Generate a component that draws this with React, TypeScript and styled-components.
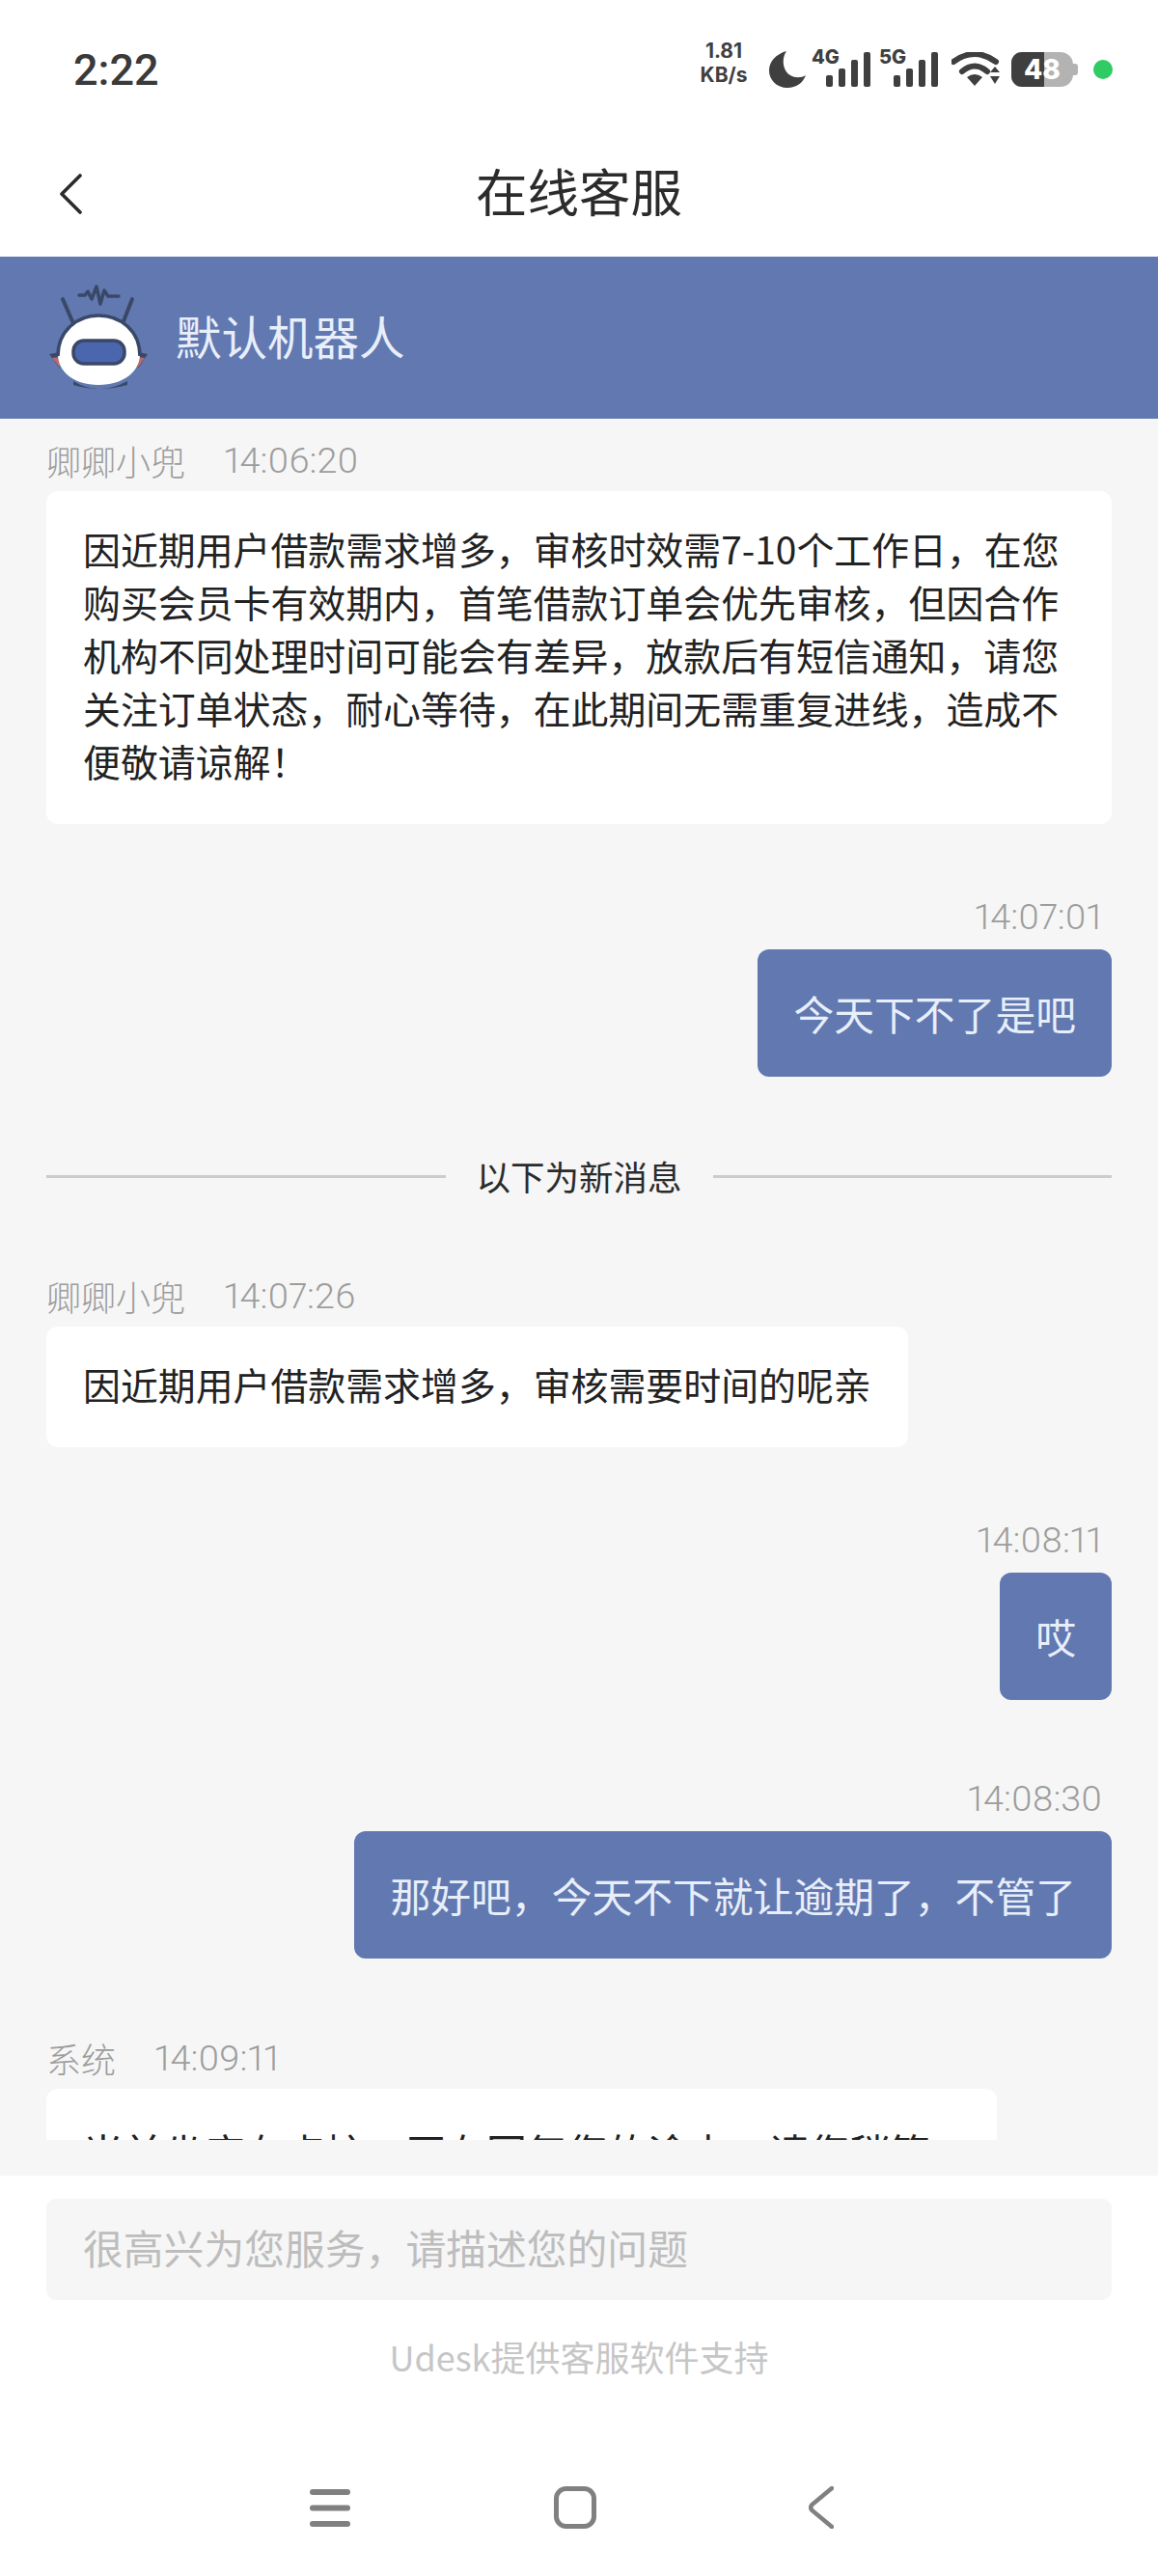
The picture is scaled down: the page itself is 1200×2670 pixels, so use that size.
import React from "react";
import styled, { createGlobalStyle, css } from "styled-components";

const GlobalStyle = createGlobalStyle`
  html, body {
    margin: 0;
    padding: 0;
    background: #ffffff;
  }
  * {
    box-sizing: border-box;
  }
`;

const CJK = `"Noto Sans CJK SC", "Noto Sans", sans-serif`;
const LATIN = `Roboto, "Noto Sans CJK SC", sans-serif`;

type Msg =
  | { kind: "in"; name: string; time: string; text: string; top: number; large?: boolean }
  | { kind: "out"; time: string; text: string; top: number }
  | { kind: "divider"; text: string; top: number };

const messages: Msg[] = [
  {
    kind: "in",
    name: "卿卿小兜",
    time: "14:06:20",
    text: "因近期用户借款需求增多，审核时效需7-10个工作日，在您购买会员卡有效期内，首笔借款订单会优先审核，但因合作机构不同处理时间可能会有差异，放款后有短信通知，请您关注订单状态，耐心等待，在此期间无需重复进线，造成不便敬请谅解！",
    top: 16,
  },
  { kind: "out", time: "14:07:01", text: "今天下不了是吧", top: 70 },
  { kind: "divider", text: "以下为新消息", top: 78 },
  {
    kind: "in",
    name: "卿卿小兜",
    time: "14:07:26",
    text: "因近期用户借款需求增多，审核需要时间的呢亲",
    top: 72,
  },
  { kind: "out", time: "14:08:11", text: "哎", top: 70 },
  { kind: "out", time: "14:08:30", text: "那好吧，今天不下就让逾期了，不管了", top: 76 },
  {
    kind: "in",
    name: "系统",
    time: "14:09:11",
    text: "当前坐席有点忙，正在回复您的途中，请您稍等",
    top: 76,
    large: true,
  },
];

const SignalBars = () => (
  <svg width="46" height="36" viewBox="0 0 46 36">
    <rect x="0" y="24" width="7" height="12" rx="2" fill="#3f3f3f" />
    <rect x="13" y="17" width="7" height="19" rx="2" fill="#3f3f3f" />
    <rect x="26" y="8" width="7" height="28" rx="2" fill="#3f3f3f" />
    <rect x="39" y="0" width="7" height="36" rx="2" fill="#3f3f3f" />
  </svg>
);

const RobotLogo = () => (
  <svg width="105" height="110" viewBox="0 0 105 110">
    <path
      d="M32 11 L38 11 L41 7 L45 15 L50 2 L54 20 L58 6 L62 12 L73 12"
      fill="none"
      stroke="#3a4868"
      strokeWidth="3.5"
      strokeLinejoin="round"
      strokeLinecap="round"
    />
    <path d="M15 15 L25 38 M87 15 L78 38" stroke="#3a4868" strokeWidth="4" strokeLinecap="round" />
    <path d="M1 72 L12 70 L12 87 Z M103 72 L93 70 L93 87 Z" fill="#3a4868" />
    <path d="M4 76 L12 75 L12 86 Z M100 76 L93 75 L93 86 Z" fill="#b86a72" />
    <path d="M26 100 Q52 116 82 100 L82 104 Q52 112 26 104 Z" fill="#3a4868" />
    <path
      d="M10 72 C10 48 30 32 52 32 C75 32 95 48 95 72 C95 90 78 104 52 104 C26 104 10 90 10 72 Z"
      fill="#ffffff"
    />
    <path d="M10 74 C10 48 30 32 52 32 C75 32 95 48 95 74" fill="none" stroke="#3a4868" strokeWidth="3.5" />
    <rect x="26" y="58" width="53" height="24" rx="11" fill="#4a66ae" stroke="#3a4868" strokeWidth="3.5" />
  </svg>
);

export default function App() {
  return (
    <Page>
      <GlobalStyle />
      <StatusBar>
        <Clock>2:22</Clock>
        <StatusIcons>
          <NetSpeed>
            <span>1.81</span>
            <span>KB/s</span>
          </NetSpeed>
          <MoonIcon width="38" height="38" viewBox="0 0 38 38">
            <path
              d="M18 0 C7 3 0 11 0 20 C0 30 8 38 19 38 C28 38 35 33 38 25 C33 28 27 28 22 25 C15 21 12 9 18 0 Z"
              fill="#3f3f3f"
            />
          </MoonIcon>
          <Signal>
            <SignalLabel>4G</SignalLabel>
            <SignalBars />
          </Signal>
          <Signal>
            <SignalLabel>5G</SignalLabel>
            <SignalBars />
          </Signal>
          <WifiIcon width="50" height="36" viewBox="0 0 50 36">
            <path d="M2 10 Q24 -6 46 10" fill="none" stroke="#3f3f3f" strokeWidth="6" strokeLinecap="round" />
            <path d="M11 20 Q24 9 37 20" fill="none" stroke="#3f3f3f" strokeWidth="6" strokeLinecap="round" />
            <path d="M16 26 Q24 20 32 26 L24 35 Z" fill="#3f3f3f" />
            <path d="M40 21 L45 15 L50 21 Z M40 25 L50 25 L45 33 Z" fill="#3f3f3f" />
          </WifiIcon>
          <Battery>
            <BatteryFill />
            <BatteryLabel>48</BatteryLabel>
          </Battery>
          <GreenDot />
        </StatusIcons>
      </StatusBar>

      <NavBar>
        <BackButton>
          <svg width="24" height="42" viewBox="0 0 24 42">
            <path d="M22 2 L3 21 L22 40" fill="none" stroke="#2b2b2b" strokeWidth="3.6" strokeLinecap="round" strokeLinejoin="round" />
          </svg>
        </BackButton>
        <NavTitle>在线客服</NavTitle>
      </NavBar>

      <AgentBar>
        <RobotLogo />
        <AgentName>默认机器人</AgentName>
      </AgentBar>

      <ChatArea>
        <ChatScroll>
          {messages.map((m, i) => {
            if (m.kind === "divider") {
              return (
                <Divider key={i} $top={m.top}>
                  <span>{m.text}</span>
                </Divider>
              );
            }
            if (m.kind === "out") {
              return (
                <OutRow key={i} $top={m.top}>
                  <OutTime>{m.time}</OutTime>
                  <OutBubble>{m.text}</OutBubble>
                </OutRow>
              );
            }
            return (
              <InRow key={i} $top={m.top}>
                <Meta>
                  <MetaName>{m.name}</MetaName>
                  <span>{m.time}</span>
                </Meta>
                <InBubble $large={m.large}>{m.text}</InBubble>
              </InRow>
            );
          })}
        </ChatScroll>
      </ChatArea>

      <Footer>
        <InputBox>很高兴为您服务，请描述您的问题</InputBox>
        <PoweredBy>Udesk提供客服软件支持</PoweredBy>
      </Footer>

      <SystemNav>
        <MenuIcon width="42" height="39" viewBox="0 0 42 39">
          <rect x="0" y="0" width="42" height="6" rx="3" fill="#808080" />
          <rect x="0" y="16.5" width="42" height="6" rx="3" fill="#808080" />
          <rect x="0" y="33" width="42" height="6" rx="3" fill="#808080" />
        </MenuIcon>
        <HomeIcon width="44" height="44" viewBox="0 0 44 44">
          <rect x="2.5" y="2.5" width="39" height="39" rx="10" fill="none" stroke="#808080" strokeWidth="5" />
        </HomeIcon>
        <svg width="26" height="44" viewBox="0 0 26 44">
          <path d="M24 2 L3.5 19 Q1 22 3.5 25 L24 42" fill="none" stroke="#808080" strokeWidth="4.5" strokeLinecap="round" />
        </svg>
      </SystemNav>
    </Page>
  );
}

const Page = styled.div`
  width: 1200px;
  height: 2670px;
  display: flex;
  flex-direction: column;
  background: #ffffff;
  overflow: hidden;
  font-family: ${CJK};
`;

const StatusBar = styled.div`
  height: 130px;
  flex: none;
  display: flex;
  align-items: flex-start;
  justify-content: space-between;
  padding: 50px 47px 0 76px;
`;

const Clock = styled.div`
  font-family: Roboto, sans-serif;
  font-size: 45px;
  line-height: 46px;
  font-weight: 500;
  color: #3a3a3a;
`;

const StatusIcons = styled.div`
  display: flex;
  align-items: flex-end;
  gap: 9px;
  height: 40px;
`;

const NetSpeed = styled.div`
  display: flex;
  flex-direction: column;
  align-items: center;
  width: 50px;
  margin-right: 13px;
  font-family: Inter, sans-serif;
  font-size: 21px;
  line-height: 25px;
  font-weight: 700;
  color: #3f3f3f;
`;

const MoonIcon = styled.svg`
  margin: 0 -3px -1px 0;
`;

const WifiIcon = styled.svg`
  margin-left: 5px;
`;

const Signal = styled.div`
  position: relative;
  width: 61px;
  height: 38px;
  display: flex;
  justify-content: flex-end;
  align-items: flex-end;
`;

const SignalLabel = styled.span`
  position: absolute;
  left: 0;
  top: -3px;
  font-family: Inter, sans-serif;
  font-size: 20px;
  line-height: 20px;
  font-weight: 800;
  color: #3f3f3f;
`;

const Battery = styled.div`
  position: relative;
  width: 64px;
  height: 36px;
  margin-left: 3px;
  background: #b3b3b3;
  border-radius: 11px 13px 13px 11px;
  display: flex;
  align-items: center;
  justify-content: center;

  &::after {
    content: "";
    position: absolute;
    right: -5px;
    top: 12px;
    width: 5px;
    height: 12px;
    border-radius: 0 3px 3px 0;
    background: #b3b3b3;
  }
`;

const BatteryFill = styled.div`
  position: absolute;
  left: 0;
  top: 0;
  bottom: 0;
  width: 34px;
  background: #3f3f3f;
  border-radius: 11px 0 0 11px;
`;

const BatteryLabel = styled.span`
  position: relative;
  font-family: Inter, sans-serif;
  font-size: 28px;
  font-weight: 800;
  line-height: 36px;
  color: #ffffff;
`;

const GreenDot = styled.div`
  width: 20px;
  height: 20px;
  margin: 0 0 8px 12px;
  border-radius: 50%;
  background: #2fcb63;
`;

const NavBar = styled.div`
  height: 136px;
  flex: none;
  position: relative;
  display: flex;
  align-items: center;
  justify-content: center;
`;

const BackButton = styled.div`
  position: absolute;
  left: 61px;
  top: 50px;
  display: flex;
`;

const NavTitle = styled.div`
  font-size: 53.5px;
  line-height: 70px;
  margin-bottom: 3px;
  color: #2b2b2b;
`;

const AgentBar = styled.div`
  height: 168px;
  flex: none;
  display: flex;
  align-items: center;
  gap: 27px;
  padding-left: 50px;
  background: #6179b0;
`;

const AgentName = styled.div`
  font-size: 47.5px;
  line-height: 60px;
  margin-bottom: 4px;
  color: #e8eefa;
`;

const ChatArea = styled.div`
  height: 1821px;
  flex: none;
  padding-bottom: 37px;
  background: #f6f6f6;
`;

const ChatScroll = styled.div`
  height: 100%;
  overflow: hidden;
  padding: 0 48px;
  display: flex;
  flex-direction: column;
`;

const InRow = styled.div<{ $top: number }>`
  flex: none;
  margin-top: ${(p) => p.$top}px;
  display: flex;
  flex-direction: column;
  align-items: flex-start;
`;

const OutRow = styled(InRow)`
  align-items: flex-end;
`;

const Meta = styled.div`
  display: flex;
  gap: 40px;
  height: 59px;
  padding-bottom: 5px;
  align-items: center;
  font-family: ${LATIN};
  font-size: 37.8px;
  font-weight: 300;
  font-variant-numeric: proportional-nums;
  color: #9d9d9d;
`;

const MetaName = styled.span`
  font-family: ${CJK};
  font-size: 36px;
  font-weight: 300;
`;

const OutTime = styled.div`
  height: 60px;
  padding: 0 10px 8px 0;
  display: flex;
  align-items: center;
  font-family: ${LATIN};
  font-size: 37.8px;
  font-weight: 300;
  font-variant-numeric: proportional-nums;
  color: #9d9d9d;
`;

const InBubble = styled.div<{ $large?: boolean }>`
  padding: 32px 38px 38px;
  background: #ffffff;
  border-radius: 12px;
  font-size: 38.9px;
  line-height: 55px;
  color: #222222;

  ${(p) =>
    p.$large &&
    css`
      width: 985px;
      padding: 37px 38px;
      font-size: 41.8px;
      line-height: 56px;
    `}
`;

const OutBubble = styled.div`
  padding: 38px 37px;
  background: #6179b0;
  border-radius: 12px;
  font-size: 41.8px;
  line-height: 56px;
  color: #e8eefa;
`;

const Divider = styled.div<{ $top: number }>`
  flex: none;
  margin-top: ${(p) => p.$top}px;
  display: flex;
  align-items: center;
  gap: 32px;
  font-size: 35.5px;
  line-height: 50px;
  color: #2b2b2b;

  &::before,
  &::after {
    content: "";
    flex: 1;
    height: 3px;
    background: #cccccc;
  }
`;

const Footer = styled.div`
  flex: 1;
  display: flex;
  flex-direction: column;
  align-items: center;
  padding: 24px 48px 0;
  background: #ffffff;
`;

const InputBox = styled.div`
  width: 100%;
  height: 105px;
  display: flex;
  align-items: center;
  padding: 0 0 5px 38px;
  background: #f6f6f6;
  border-radius: 10px;
  font-size: 41.8px;
  color: #bdbdbd;
`;

const PoweredBy = styled.div`
  margin-top: 35px;
  font-size: 36px;
  line-height: 46px;
  color: #c6c6c6;
`;

const SystemNav = styled.div`
  flex: none;
  height: 113px;
  padding: 0 0 29px 321px;
  display: flex;
  align-items: center;
`;

const MenuIcon = styled.svg`
  margin-right: 211px;
`;

const HomeIcon = styled.svg`
  margin-right: 220px;
`;
